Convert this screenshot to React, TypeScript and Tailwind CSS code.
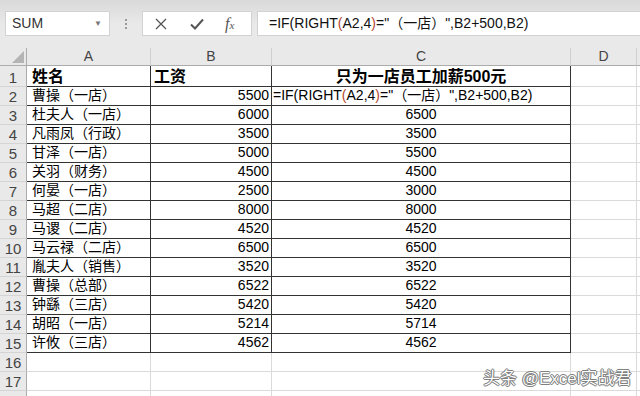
import React from "react";

const CJK = "font-['Liberation_Sans','Noto_Sans_CJK_SC',sans-serif]";

const COL_W = ["w-[124px]", "w-[121px]", "w-[299px]", "w-[66px]"];
const COL_LABELS = ["A", "B", "C", "D"];

const DATA: [string, string, string][] = [
  ["曹操（一店）", "5500", ""],
  ["杜夫人（一店）", "6000", "6500"],
  ["凡雨凤（行政）", "3500", "3500"],
  ["甘泽（一店）", "5000", "5500"],
  ["关羽（财务）", "4500", "4500"],
  ["何晏（一店）", "2500", "3000"],
  ["马超（二店）", "8000", "8000"],
  ["马谡（二店）", "4520", "4520"],
  ["马云禄（二店）", "6500", "6500"],
  ["胤夫人（销售）", "3520", "3520"],
  ["曹操（总部）", "6522", "6522"],
  ["钟繇（三店）", "5420", "5420"],
  ["胡昭（一店）", "5214", "5714"],
  ["许攸（三店）", "4562", "4562"],
];

function RowHead({ n, h }: { n?: number; h: string }) {
  return (
    <div
      className={`${h} w-[27px] shrink-0 bg-[#e9e9e9] border-r border-b border-r-[#ababab] border-b-[#d4d4d4] flex items-end justify-center pb-[1px] text-[15px] leading-none text-[#444]`}
    >
      {n}
    </div>
  );
}

function Formula() {
  return (
    <span className="whitespace-nowrap">
      =IF(RIGHT<span className="text-[#b5472f]">(</span>A2,4<span className="text-[#b5472f]">)</span>="（一店）",B2+500,B2)
    </span>
  );
}

function Toolbar() {
  return (
    <div className="h-[48px] bg-gradient-to-b from-[#d9d9d9] via-[#e9e9e9] to-[#e9e9e9] pt-[11px] pl-[5px] flex items-start">
      <div className="w-[105px] h-[25px] bg-white border border-[#d2d2d2] flex items-center justify-between pl-[6px] pr-[7px] text-[14px] text-[#333]">
        <span>SUM</span>
        <span className="text-[8px] text-[#777]">▼</span>
      </div>
      <div className="w-[32px] h-[25px] flex flex-col items-center justify-center gap-[2px]">
        <span className="w-[2px] h-[2px] bg-[#9a9a9a]" />
        <span className="w-[2px] h-[2px] bg-[#9a9a9a]" />
        <span className="w-[2px] h-[2px] bg-[#9a9a9a]" />
      </div>
      <div className="w-[110px] h-[25px] bg-white border border-[#d2d2d2] flex items-center">
        <svg width="12" height="12" viewBox="0 0 12 12" className="ml-[12px]">
          <path d="M1 1 L11 11 M11 1 L1 11" stroke="#555" strokeWidth="1.3" fill="none" />
        </svg>
        <svg width="14" height="12" viewBox="0 0 14 12" className="ml-[23px]">
          <path d="M1 6.5 L5 10.5 L13 1.5" stroke="#555" strokeWidth="2" fill="none" />
        </svg>
        <span className="ml-[21px] font-['Liberation_Serif',serif] italic text-[16px] text-[#555] leading-none">
          f<span className="text-[11px]">x</span>
        </span>
      </div>
      <div className="ml-[5px] flex-1 h-[25px] bg-white border border-[#d2d2d2] border-r-0 flex items-center pl-[11px] text-[14px] text-[#111]">
        <span className={CJK}>
          <Formula />
        </span>
      </div>
    </div>
  );
}

function HeaderRow() {
  return (
    <div className="flex h-[18px] bg-[#e9e9e9]">
      <div className="w-[27px] shrink-0 border-r border-b border-[#ababab] relative">
        <svg width="12" height="12" viewBox="0 0 12 12" className="absolute right-[2px] bottom-[2px]">
          <path d="M12 0 L12 12 L0 12 Z" fill="#b4b4b4" />
        </svg>
      </div>
      {COL_LABELS.map((l, i) => (
        <div
          key={l}
          className={`${COL_W[i]} shrink-0 border-r border-b border-r-[#d0d0d0] border-b-[#ababab] flex items-center justify-center text-[14px] text-[#444]`}
        >
          {l}
        </div>
      ))}
      <div className="flex-1 border-b border-[#ababab]" />
    </div>
  );
}

function Cell({
  i,
  h,
  dark,
  children,
  align = "justify-start",
}: {
  i: number;
  h: string;
  dark: boolean;
  children?: React.ReactNode;
  align?: string;
}) {
  return (
    <div
      className={`${COL_W[i]} ${h} shrink-0 border-r border-b ${
        dark ? "border-r-[#333] border-b-[#333]" : "border-r-[#dadada] border-b-[#dadada]"
      } flex items-end ${align} px-[2px] pb-[1px] overflow-visible whitespace-nowrap text-black ${CJK} text-[14px] leading-[17px]`}
    >
      {children}
    </div>
  );
}

export default function App() {
  return (
    <div className="w-[640px] h-[396px] overflow-hidden bg-white relative font-['Liberation_Sans',sans-serif]">
      <Toolbar />
      <HeaderRow />

      {/* row 1 */}
      <div className="flex">
        <RowHead n={1} h="h-[21px]" />
        <Cell i={0} h="h-[21px]" dark>
          <span className="font-bold text-[16px] pl-[3px]">姓名</span>
        </Cell>
        <Cell i={1} h="h-[21px]" dark>
          <span className="font-bold text-[16px] pl-[1px]">工资</span>
        </Cell>
        <Cell i={2} h="h-[21px]" dark align="justify-center">
          <span className="font-bold text-[16px]">只为一店员工加薪500元</span>
        </Cell>
        <Cell i={3} h="h-[21px]" dark={false} />
        <div className="flex-1 border-b border-[#dadada]" />
      </div>

      {DATA.map((r, idx) => (
        <div key={idx} className="flex">
          <RowHead n={idx + 2} h="h-[19px]" />
          <Cell i={0} h="h-[19px]" dark>
            <span className="pl-[3px]">{r[0]}</span>
          </Cell>
          <Cell i={1} h="h-[19px]" dark align="justify-end">
            {r[1]}
          </Cell>
          {idx === 0 ? (
            <Cell i={2} h="h-[19px]" dark>
              <span className="-ml-[1px]">
                <Formula />
              </span>
            </Cell>
          ) : (
            <Cell i={2} h="h-[19px]" dark align="justify-center">
              {r[2]}
            </Cell>
          )}
          <Cell i={3} h="h-[19px]" dark={false} />
          <div className="flex-1 border-b border-[#dadada]" />
        </div>
      ))}

      {[16, 17, 0].map((n) => (
        <div key={n} className="flex">
          <RowHead n={n || undefined} h="h-[19px]" />
          <Cell i={0} h="h-[19px]" dark={false} />
          <Cell i={1} h="h-[19px]" dark={false} />
          <Cell i={2} h="h-[19px]" dark={false} />
          <Cell i={3} h="h-[19px]" dark={false} />
          <div className="flex-1 border-b border-[#dadada]" />
        </div>
      ))}

      <div
        className={`absolute left-[483px] top-[366px] text-[17px] text-white font-['Liberation_Sans','Noto_Sans_CJK_SC',sans-serif] [text-shadow:0_0_1px_#444,1px_0_0_#888,-1px_0_0_#888,0_1px_0_#888,0_-1px_0_#888]`}
      >
        头条 @Excel实战君
      </div>
    </div>
  );
}
